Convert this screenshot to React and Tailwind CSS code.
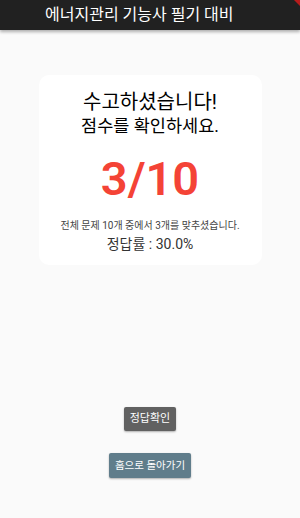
import React from 'react';

const App = () => {
  return (
    <div
      className="relative w-[300px] h-[518px] bg-[#fafafa] overflow-hidden flex flex-col"
      style={{ fontFamily: '"Roboto", "Noto Sans CJK KR", sans-serif' }}
    >
      <header className="h-[30px] bg-[#212121] shadow-[0_2px_3px_rgba(0,0,0,0.3)] flex items-center pl-[45px] shrink-0 z-10">
        <h1 className="text-white text-[16px] leading-none">에너지관리 기능사 필기 대비</h1>
      </header>
      <div className="absolute top-0 right-0 w-0 h-0 border-t-[6px] border-l-[6px] border-t-[#b71c1c] border-l-transparent z-20" />

      <main className="flex flex-col items-center pt-[45px]">
        <div className="w-[223px] h-[190px] bg-white rounded-[10px] flex flex-col items-center pt-[14px]">
          <p className="text-[20px] leading-[26px] text-black">수고하셨습니다!</p>
          <p className="text-[17.5px] leading-[22px] text-black">점수를 확인하세요.</p>
          <p className="mt-[14px] text-[47px] leading-[56px] font-semibold text-[#f44336]">3/10</p>
          <p className="mt-[12px] text-[10px] leading-[14px] text-[#444]">전체 문제 10개 중에서 3개를 맞추셨습니다.</p>
          <p className="mt-[1px] text-[14px] leading-[20px] text-[#333]">정답률 : 30.0%</p>
        </div>

        <button className="mt-[142px] h-[24px] px-[6px] bg-[#616161] text-white text-[11px] rounded-[2px] shadow-[0_1px_2px_rgba(0,0,0,0.3)]">
          정답확인
        </button>
        <button className="mt-[22px] h-[25px] px-[6px] bg-[#607d8b] text-white text-[10.5px] rounded-[2px] shadow-[0_1px_2px_rgba(0,0,0,0.3)]">
          홈으로 돌아가기
        </button>
      </main>
    </div>
  );
};

export default App;
